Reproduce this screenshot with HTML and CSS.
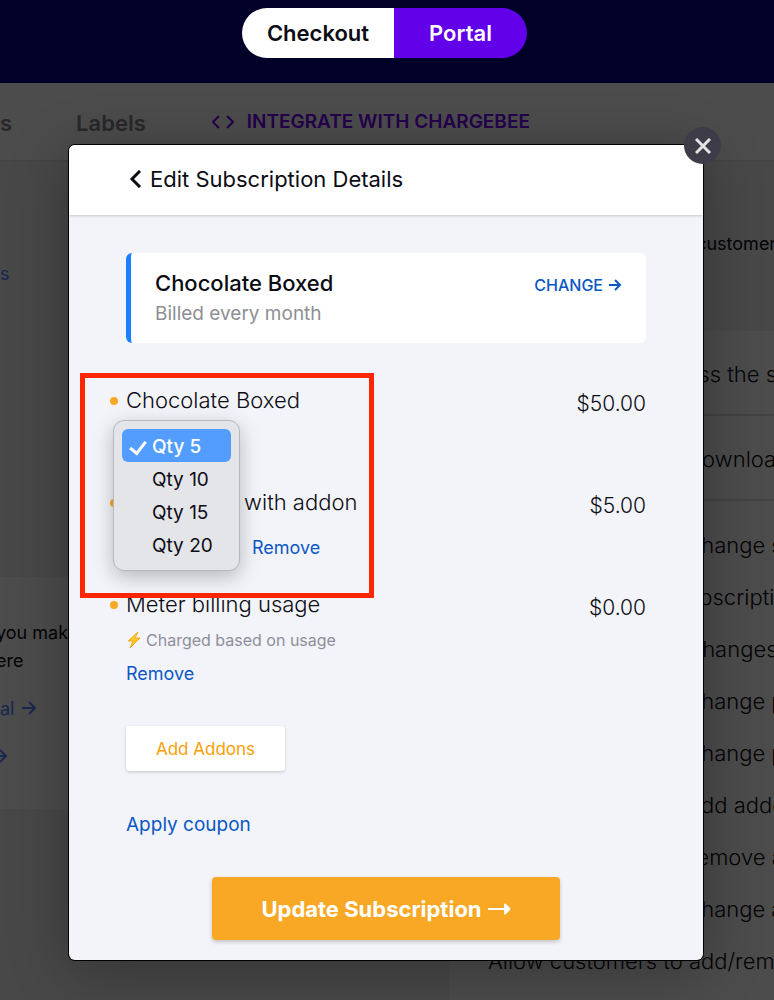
FILE: index.html
```html
<!DOCTYPE html>
<html lang="en">
<head>
    <meta charset="utf-8">
    <meta name="viewport" content="width=device-width, initial-scale=1.0">
    <title>Edit Subscription Details</title>
    <link rel="stylesheet" href="styles.css">
</head>

<body>
    <header class="topbar">
        <div class="switch">
            <button type="button" class="switch-item">Checkout</button>
            <button type="button" class="switch-item active">Portal</button>
        </div>
    </header>

    <!-- Page behind the dialog -->
    <div class="page">
        <nav class="tabs">
            <a class="tab tab-first" href="#">s</a>
            <a class="tab" href="#">Labels</a>
            <a class="tab-code" href="#">
                <svg width="22" height="16" viewBox="0 0 22 16"><path d="M7 2 1 8l6 6M15 2l6 6-6 6" /></svg>
                INTEGRATE WITH CHARGEBEE
            </a>
        </nav>

        <div class="columns">
            <aside class="left">
                <a class="left-link" href="#">s</a>
                <div class="hint">
                    <p>you make<br>ere</p>
                    <a href="#">al <svg width="14" height="14" viewBox="0 0 14 14"><path d="M0 7h13M7 1l6 6-6 6" /></svg></a>
                    <a class="cut" href="#"><svg width="14" height="14" viewBox="0 0 14 14"><path d="M0 7h13M7 1l6 6-6 6" /></svg></a>
                </div>
            </aside>
            <main class="right">
                <p class="intro">Configure options for your customers</p>
                <ul class="settings">
                    <li class="setting ruled">Customers can access the self-serve portal</li>
                    <li class="setting ruled">Allow customers to download invoices</li>
                    <li class="setting">Allow customers to change subscription</li>
                    <li class="setting">Allow previews of subscription</li>
                    <li class="setting">Remove scheduled changes</li>
                    <li class="setting">Allow customers to change plan</li>
                    <li class="setting">Allow customers to change plan quantity</li>
                    <li class="setting">Allow customers to add addons</li>
                    <li class="setting">Allow customers to remove addons</li>
                    <li class="setting">Allow customers to change addons</li>
                    <li class="setting">Allow customers to add/remove coupons</li>
                </ul>
            </main>
        </div>
    </div>

    <!-- Dialog -->
    <div class="overlay">
        <div class="modal" role="dialog" aria-label="Edit Subscription Details">
            <button type="button" class="close" aria-label="Close">
                <svg width="16" height="16" viewBox="0 0 16 16"><path d="M1 1l14 14M15 1 1 15" /></svg>
            </button>
            <div class="modal-header">
                <button type="button" class="back">
                    <svg width="13" height="18" viewBox="0 0 13 18"><path d="M11 1 3 9l8 8" /></svg>
                    Edit Subscription Details
                </button>
            </div>

            <div class="modal-body">
                <div class="plan">
                    <div>
                        <div class="plan-name">Chocolate Boxed</div>
                        <div class="plan-cycle">Billed every month</div>
                    </div>
                    <a class="change" href="#">CHANGE
                        <svg width="13" height="12" viewBox="0 0 13 12"><path d="M0 6h11M6 1l5 5-5 5" /></svg>
                    </a>
                </div>

                <div class="items">
                    <div class="item">
                        <div class="item-main">
                            <div class="item-name">Chocolate Boxed</div>
                            <div class="item-qty">
                                <select class="qty-menu" size="4" aria-label="Quantity">
                                    <option selected>Qty 5</option>
                                    <option>Qty 10</option>
                                    <option>Qty 15</option>
                                    <option>Qty 20</option>
                                </select>
                            </div>
                        </div>
                        <div class="price">$50.00</div>
                    </div>
                    <div class="item">
                        <div class="item-main">
                            <div class="item-name">Milk Boxed with addon</div>
                            <div class="item-qty">
                                <select class="qty" aria-label="Addon quantity"><option>Qty 1</option></select>
                                <a href="#">Remove</a>
                            </div>
                        </div>
                        <div class="price">$5.00</div>
                    </div>
                    <div class="item">
                        <div class="item-main">
                            <div class="item-name">Meter billing usage</div>
                            <div class="usage">
                                <svg width="16" height="18" viewBox="0 0 16 18"><path d="M12 1 2 10h5L4 17 14 7H9z" /></svg>
                                Charged based on usage
                            </div>
                            <a href="#">Remove</a>
                        </div>
                        <div class="price">$0.00</div>
                    </div>
                    <div class="highlight"></div>
                </div>

                <button type="button" class="add">Add Addons</button>
                <a class="coupon" href="#">Apply coupon</a>
                <button type="button" class="update">
                    Update Subscription
                    <svg width="24" height="12" viewBox="0 0 24 12"><path d="M1 6h18" /><path class="head" d="M17 1q1-1 2 0l4 4q1 1 0 2l-4 4q-1 1-2 0z" /></svg>
                </button>
            </div>
        </div>
    </div>
</body>
</html>
```
FILE: styles.css
```css
* {
    box-sizing: border-box;
}

body {
    margin: 0;
    height: 100vh;
    overflow: hidden;
    position: relative;
    font-family: Inter, "Liberation Sans", sans-serif;
    font-size: 18px;
    line-height: 28px;
    color: #0c0c14;
    background: #f0f0f6;
}

a {
    color: #0b57c4;
    text-decoration: none;
}

button {
    font: inherit;
    border: none;
    padding: 0;
    cursor: pointer;
}

svg {
    fill: none;
    stroke: currentColor;
    stroke-width: 2;
}

/* Top bar */
.topbar {
    height: 83px;
    padding-top: 8px;
    display: flex;
    justify-content: center;
    background: #000028;
}

.switch {
    display: flex;
    height: 50px;
    border-radius: 25px;
    overflow: hidden;
    margin-right: 5px;
}

.switch-item {
    width: 152px;
    background: #fff;
    color: #0c0c14;
    font-size: 22px;
    font-weight: 600;
}

.switch-item.active {
    width: 133px;
    background: #6200ea;
    color: #fff;
}

/* Tabs */
.tabs {
    height: 79px;
    padding-top: 2px;
    display: flex;
    align-items: center;
    background: #fff;
    border-bottom: 2px solid #e4e4e8;
}

.tab {
    margin-right: 66px;
    font-size: 22px;
    font-weight: 600;
    color: #85828f;
}

.tab-first {
    margin-right: 64px;
}

.tab-code {
    display: flex;
    align-items: center;
    gap: 13px;
    padding-bottom: 2px;
    font-size: 19px;
    font-weight: 600;
    color: #7a00ff;
}

/* Background columns */
.columns {
    display: flex;
}

.left {
    width: 449px;
    padding-top: 98px;
}

.left a {
    display: block;
    color: #4a8cff;
}

.hint {
    margin-top: 289px;
    padding: 42px 0 38px;
    background: #fff;
}

.hint p {
    margin: 0 0 20px -4px;
}

.hint svg {
    margin-left: 2px;
}

.hint .cut {
    margin: 20px 0 0 -9px;
}

.right {
    flex: 1;
    white-space: nowrap;
    overflow: hidden;
}

.intro {
    margin: 0;
    padding: 68px 0 73px 18px;
}

.settings {
    margin: 0;
    padding: 0 0 20px 39px;
    list-style: none;
    background: #fff;
    font-size: 22px;
    font-weight: 300;
}

.setting {
    height: 52px;
    line-height: 52px;
}

.setting.ruled {
    height: 85px;
    line-height: 86px;
    margin-left: -39px;
    padding-left: 39px;
    border-bottom: 2px solid #dcdce2;
}

.setting.ruled + .setting:not(.ruled) {
    margin-top: 18px;
}

/* Dialog */
.overlay {
    position: absolute;
    top: 83px;
    left: 0;
    right: 0;
    bottom: 0;
    padding: 62px 71px 40px 69px;
    background: rgba(0, 0, 0, 0.7);
}

.modal {
    position: relative;
    border-radius: 6px;
    background: #f3f4f9;
    box-shadow: 0 0 0 1px #000, 0 10px 60px rgba(0, 0, 0, 0.3);
}

.close {
    position: absolute;
    top: -18px;
    right: -18px;
    width: 37px;
    height: 37px;
    border-radius: 50%;
    display: flex;
    align-items: center;
    justify-content: center;
    background: #3d3c48;
    color: #e4e4e4;
}

.close svg {
    stroke-width: 3;
}

.modal-header {
    height: 70px;
    padding: 0 60px 2px;
    display: flex;
    align-items: center;
    border-radius: 6px 6px 0 0;
    background: #fff;
    box-shadow: 0 1px 3px rgba(0, 0, 0, 0.18);
}

.back {
    display: flex;
    align-items: center;
    gap: 8px;
    background: none;
    color: #0c0c14;
    font-size: 22px;
}

.back svg {
    stroke-width: 3;
}

.modal-body {
    display: flex;
    flex-direction: column;
    align-items: flex-start;
    padding: 38px 57px 20px;
}

.plan {
    align-self: stretch;
    display: flex;
    justify-content: space-between;
    height: 90px;
    padding: 16px 24px;
    border-left: 5px solid #1a80ff;
    border-radius: 6px;
    background: #fff;
}

.plan-name {
    font-size: 22px;
    font-weight: 500;
}

.plan-cycle {
    font-size: 19px;
    line-height: 34px;
    color: #8e8e93;
}

.change {
    display: flex;
    align-items: center;
    align-self: flex-start;
    gap: 6px;
    padding-top: 2px;
    font-size: 16px;
    font-weight: 500;
}

/* Subscription items */
.items {
    position: relative;
    align-self: stretch;
    padding-top: 43px;
}

.item {
    display: flex;
    justify-content: space-between;
    min-height: 102px;
}

.item-main {
    position: relative;
}

.item-main::before {
    content: "";
    position: absolute;
    top: 11px;
    left: -16px;
    width: 8px;
    height: 8px;
    border-radius: 50%;
    background: #f9a825;
}

.item-name {
    font-size: 22px;
    font-weight: 300;
    line-height: 28px;
}

.price {
    font-size: 21px;
    font-weight: 300;
    line-height: 36px;
}

.item-qty {
    display: flex;
    align-items: center;
    gap: 14px;
    height: 28px;
    margin-top: 18px;
}

.qty {
    width: 112px;
    font: inherit;
    border: none;
    background: none;
}

.qty-menu {
    position: absolute;
    z-index: 1;
    top: 34px;
    left: -13px;
    width: 127px;
    height: 151px;
    padding: 8px;
    overflow: hidden;
    border: 1px solid #b8b8bc;
    border-radius: 11px;
    outline: none;
    background: #e4e5e9;
    box-shadow: 0 6px 20px rgba(0, 0, 0, 0.25);
    font: inherit;
    font-size: 19px;
}

.qty-menu option {
    position: relative;
    height: 33px;
    min-height: 33px;
    padding: 6px 0 0 30px;
    border-radius: 6px;
    color: #0c0c14;
}

.qty-menu option:checked {
    background: linear-gradient(#529dff, #529dff);
    color: #fff;
    font-weight: 500;
}

.qty-menu option:checked::before {
    content: "";
    position: absolute;
    top: 9px;
    left: 11px;
    width: 7px;
    height: 13px;
    border: solid #fff;
    border-width: 0 3px 3px 0;
    transform: rotate(38deg);
}

.usage {
    display: flex;
    align-items: center;
    gap: 4px;
    margin: 8px 0 6px;
    font-size: 16px;
    color: #8e8e9a;
}

.usage svg {
    fill: #ffc928;
    stroke: #f9a825;
    stroke-width: 1;
}

/* Frame round the quantity controls */
.highlight {
    position: absolute;
    top: 30px;
    left: -46px;
    width: 294px;
    height: 225px;
    border: 5px solid #ff2600;
    pointer-events: none;
}

.add {
    height: 45px;
    width: 159px;
    margin-top: 34px;
    border-radius: 3px;
    background: #fff;
    box-shadow: 0 1px 3px rgba(0, 0, 0, 0.2);
    color: #fb9d05;
    font-size: 17px;
}

.coupon {
    margin-top: 40px;
    font-size: 19px;
}

.update {
    align-self: center;
    display: flex;
    align-items: center;
    justify-content: center;
    gap: 5px;
    width: 348px;
    height: 63px;
    margin-top: 38px;
    border-radius: 4px;
    background: #f9a825;
    box-shadow: 0 2px 4px rgba(0, 0, 0, 0.2);
    color: #fff;
    font-size: 22px;
    font-weight: 700;
}

.update .head {
    fill: currentColor;
    stroke: none;
}
```
